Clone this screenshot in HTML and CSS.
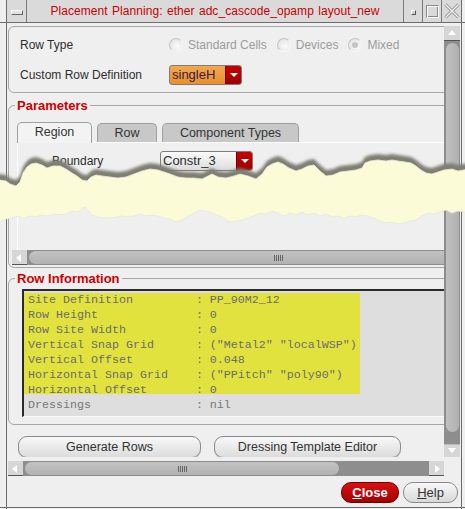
FILE: index.html
```html
<!DOCTYPE html>
<html>
<head>
<meta charset="utf-8">
<title>Placement Planning</title>
<link rel="stylesheet" href="styles.css">
</head>
<body>
<div class="screen">
  <div class="win">
    <div class="titlebar">
      <div class="tb-btn tb-menu"><span class="bar"></span></div>
      <div class="tb-title">Placement Planning: ether adc_cascode_opamp layout_new</div>
      <div class="tb-btn tb-min"><span class="dot"></span></div>
      <div class="tb-btn tb-max"><span class="sq"></span></div>
      <div class="tb-btn tb-close">
        <svg width="16" height="16" viewBox="0 0 16 16"><path d="M1.5 1.5 L14.5 14.5 M14.5 1.5 L1.5 14.5" stroke="#8a8a8a" stroke-width="3" fill="none"/><path d="M1.5 1.5 L14.5 14.5 M14.5 1.5 L1.5 14.5" stroke="#f4f4f4" stroke-width="1.4" fill="none"/></svg>
      </div>
    </div>
    <div class="client">
      <div class="scrollwrap">
        <div class="viewport">
          <div class="content">
            <div class="panel">
              <div class="row">
                <div class="lbl">Row Type</div>
                <div class="radios">
                  <span class="opt"><span class="radio"></span>Standard Cells</span>
                  <span class="opt"><span class="radio"></span>Devices</span>
                  <span class="opt"><span class="radio on"></span>Mixed</span>
                </div>
              </div>
              <div class="row row2">
                <div class="lbl">Custom Row Definition</div>
                <div class="combo orange"><span class="ctext">singleH</span><span class="carrow"></span></div>
              </div>
            </div>

            <fieldset class="group params">
              <legend>Parameters</legend>
              <div class="tabs">
                <div class="tab active t-region">Region</div>
                <div class="tab t-row">Row</div>
                <div class="tab t-comp">Component Types</div>
              </div>
              <div class="tabpanel">
                <div class="prow">
                  <span class="plbl">Boundary</span>
                  <div class="combo white"><span class="ctext">Constr_3</span><span class="carrow"></span></div>
                </div>
              </div>
              <div class="hscroll inner">
                <span class="sbtn left"></span>
                <span class="thumb"><span class="grip"></span></span>
              </div>
            </fieldset>

            <fieldset class="group rowinfo">
              <legend>Row Information</legend>
              <div class="textbox">
                <div class="hl">
<div class="line">Site Definition         : PP_90M2_12</div>
<div class="line">Row Height              : 0</div>
<div class="line">Row Site Width          : 0</div>
<div class="line">Vertical Snap Grid      : ("Metal2" "localWSP")</div>
<div class="line">Vertical Offset         : 0.048</div>
<div class="line">Horizontal Snap Grid    : ("PPitch" "poly90")</div>
<div class="line">Horizontal Offset       : 0</div>
                </div>
                <div class="line plain">Dressings               : nil</div>
              </div>
            </fieldset>

            <div class="actions">
              <button class="btn gen">Generate Rows</button>
              <button class="btn dress">Dressing Template Editor</button>
            </div>
          </div>
        </div>
        <div class="vscroll">
          <span class="vbtn up"></span>
          <span class="vthumb"></span>
          <span class="vtrack"></span>
          <span class="vbtn down"></span>
        </div>
        <div class="hscroll outer">
          <span class="sbtn left"></span>
          <span class="thumb"><span class="grip"></span></span>
          <span class="track"></span>
          <span class="sbtn right"></span>
        </div>
        <div class="corner"></div>
      </div>
      <div class="footer">
        <button class="fbtn close"><u>C</u>lose</button>
        <button class="fbtn help"><u>H</u>elp</button>
      </div>
    </div>
  </div>

  <svg class="tear" width="465" height="509" viewBox="0 0 465 509">
    <defs>
      <filter id="blur" x="-5%" y="-20%" width="110%" height="140%"><feGaussianBlur stdDeviation="1.8"/></filter>
    </defs>
    <path filter="url(#blur)" fill="#7e7e72" d="M-4,174 L0,174 6,175 10,178 16,180 20,176 23,167 27,161 31,158 36,157 42,159 47,162 53,160 60,160 66,163 72,167 77,170 82,174 87,175 91,171 96,169 102,170 110,171 118,172 126,171 134,168 142,165 150,163 158,164 164,166 170,168 178,171 186,172 194,172 202,173 208,170 212,168 218,171 226,172 234,170 240,168 248,170 256,173 262,168 267,161 272,158 278,156 283,158 289,162 296,165 302,163 308,160 314,159 320,165 326,170 333,169 340,166 348,165 356,164 362,162 365,157 370,155 378,154 386,155 392,154 398,155 405,156 411,157 416,160 421,164 426,167 432,168 438,166 444,164 452,163 458,165 469,163 L469,200 L-4,200 Z"/>
    <path fill="#fbfbd8" stroke="#e6e6dc" stroke-width="0.8" d="M-4,180 L0,180 6,181 10,184 16,186 20,182 23,173 27,167 31,164 36,163 42,165 47,168 53,166 60,166 66,169 72,173 77,176 82,180 87,181 91,177 96,175 102,176 110,177 118,178 126,177 134,174 142,171 150,169 158,170 164,172 170,174 178,177 186,178 194,178 202,179 208,176 212,174 218,177 226,178 234,176 240,174 248,176 256,179 262,174 267,167 272,164 278,162 283,164 289,168 296,171 302,169 308,166 314,165 320,171 326,176 333,175 340,172 348,171 356,170 362,168 365,163 370,161 378,160 386,161 392,160 398,161 405,162 411,163 416,166 421,170 426,173 432,174 438,172 444,170 452,169 458,171 469,169 L469,212 465,212 458,211 452,213 446,210 440,212 434,214 428,213 422,216 416,220 410,221 404,223 398,224 392,222 386,223 380,221 374,218 368,216 362,215 356,217 350,216 344,218 338,216 332,217 326,214 320,216 314,213 308,215 302,212 296,215 290,213 284,216 278,213 272,211 266,214 260,213 254,216 248,218 242,220 236,221 230,222 224,218 218,215 212,213 206,211 200,210 194,213 188,216 182,220 176,222 170,219 164,218 158,216 152,215 146,216 140,214 134,216 128,217 122,216 116,217 110,218 104,218 98,217 92,215 88,210 85,207 82,209 78,212 72,211 66,214 60,215 54,214 48,216 42,215 36,217 30,216 24,218 18,216 12,218 6,219 0,222 -4,222 Z"/>
  </svg>
</div>
</body>
</html>
```

FILE: styles.css
```css
* { box-sizing: border-box; }
html, body { margin: 0; padding: 0; }
body {
  width: 465px;
  height: 509px;
  overflow: hidden;
  background: #efefef;
  font-family: "Liberation Sans", Arial, sans-serif;
  font-size: 12px;
  color: #2e2e2e;
}
.screen { position: relative; width: 465px; height: 509px; }
.screen::before {
  content: ""; position: absolute; left: 0; right: 0; top: 22px; height: 1px; background: #6c6c6c;
}
.screen::after {
  content: ""; position: absolute; left: 0; right: 0; top: 507px; height: 1px; background: #6c6c6c;
}

/* window frame */
.win {
  margin-left: 6px;
  width: 456px;
  height: 509px;
  border-left: 1px solid #6c6c6c;
  border-right: 1px solid #6c6c6c;
  display: flex;
  flex-direction: column;
}
.titlebar {
  height: 23px;
  display: flex;
  background: #dadada;
  border-bottom: 1px solid #6c6c6c;
}
.tb-btn { width: 19px; border-right: 1px solid #7a7a7a; display: flex; align-items: center; justify-content: center; }
.tb-menu { width: 20px; }
.tb-menu .bar { width: 12px; height: 5px; background: #e4e4e4; border: 1px solid; border-color: #fafafa #666 #666 #fafafa; margin-top: 2px; }
.tb-title {
  width: 377px;
  border-right: 1px solid #7a7a7a;
  color: #cc0000;
  font-size: 12px;
  letter-spacing: 0.05px;
  word-spacing: 1px;
  text-align: center;
  line-height: 22px;
}
.tb-min .dot { width: 5px; height: 5px; border: 1px solid; border-color: #fafafa #555 #555 #fafafa; background: #d0d0d0; margin-top: 3px; }
.tb-max .sq { width: 13px; height: 13px; border: 1px solid; border-color: #8a8a8a #fafafa #fafafa #8a8a8a; box-shadow: inset 1px 1px 0 #fafafa, inset -1px -1px 0 #8a8a8a; }
.tb-close { border-right: none; }

.client { flex: 1; padding: 3px 0 0 1px; display: flex; flex-direction: column; }
.scrollwrap {
  display: grid;
  grid-template-columns: 436px 16px;
  grid-template-rows: 431px 16px;
  row-gap: 4px;
}
.viewport { overflow: hidden; position: relative; }
.content { width: 452px; }

/* top panel */
.panel {
  height: 67px;
  border: 1px solid #a6a6a6;
  border-radius: 6px;
  padding: 8px 0 0 11px;
}
.row { display: flex; align-items: center; height: 20px; }
.row2 { margin-top: 10px; }
.lbl { width: 149px; }
.radios { display: flex; color: #9c9c9c; }
.opt { display: flex; align-items: center; margin-right: 10px; }
.radio {
  width: 14px; height: 14px; border-radius: 50%;
  background: radial-gradient(circle at 60% 60%, #fbfbfb 0%, #e6e6e6 70%);
  border: 1px solid; border-color: #c4c4c4 #f6f6f6 #f6f6f6 #c4c4c4;
  margin-right: 5px;
  display: flex; align-items: center; justify-content: center;
}
.radio.on::after { content: ""; width: 6px; height: 6px; border-radius: 50%; background: #c4c4c4; }

.combo {
  height: 20px;
  display: flex;
  border: 1px solid #7c7c7c;
  border-radius: 3px;
  overflow: hidden;
}
.combo .ctext { flex: 1; padding-left: 2px; line-height: 18px; font-size: 13px; }
.combo .carrow {
  width: 16px;
  background: linear-gradient(#c80000, #9c0000);
  border-left: 1px solid #700000;
  position: relative;
}
.combo .carrow::after {
  content: ""; position: absolute; left: 4px; top: 7px;
  border-left: 4px solid transparent; border-right: 4px solid transparent; border-top: 4px solid #fff;
}
.combo.orange { width: 73px; background: linear-gradient(#f3a852, #e8902c); }
.combo.orange .ctext { color: #3a1a48; }
.combo.white { width: 93px; background: linear-gradient(#fafafa, #dcdcdc); }

/* groups */
.group {
  margin: 0;
  min-width: 0;
  border: 1px solid #a6a6a6;
  border-radius: 6px;
}
.group legend {
  margin-left: 3px;
  padding: 0 2px;
  color: #cc0000;
  font-weight: bold;
  font-size: 13px;
  line-height: 15px;
}
.params { margin-top: 5px; padding: 0 0 2px 3px; }
.tabs { display: flex; align-items: flex-end; gap: 5px; margin: 8px 0 0 5px; height: 21px; }
.tab {
  height: 19px;
  border: 1px solid #a0a0a0;
  border-bottom: none;
  border-radius: 5px 5px 0 0;
  background: #c8c8c8;
  text-align: center;
  line-height: 19px;
  font-size: 12.5px;
  color: #333;
}
.tab.active { height: 21px; background: #f3f3f3; position: relative; z-index: 1; margin-bottom: -1px; }
.t-region { width: 75px; }
.t-row { width: 60px; }
.t-comp { width: 137px; }
.tabpanel {
  margin-left: 5px;
  height: 108px;
  border-top: 1px solid #fdfdfd;
  border-left: 1px solid #fdfdfd;
  padding: 8px 0 0 34px;
}
.prow { display: flex; align-items: center; height: 20px; }
.plbl { width: 108px; }

.hscroll { display: flex; height: 15px; background: #8e8e8e; }
.sbtn {
  width: 15px; height: 15px; flex: none;
  background: #d6d6d6;
  border-bottom: 1px solid #555;
  position: relative;
}
.sbtn.left::after {
  content: ""; position: absolute; left: 4px; top: 4px;
  border-top: 4px solid transparent; border-bottom: 4px solid transparent; border-right: 5px solid #fff;
}
.sbtn.right::after {
  content: ""; position: absolute; left: 6px; top: 4px;
  border-top: 4px solid transparent; border-bottom: 4px solid transparent; border-left: 5px solid #fff;
}
.thumb {
  height: 15px;
  background: linear-gradient(#c2c2c2, #b2b2b2);
  border: 1px solid #8c8c8c;
  border-radius: 8px 0 0 8px;
  margin-left: 1px;
  position: relative;
}
.grip {
  position: absolute; top: 4px; width: 9px; height: 6px;
  background: repeating-linear-gradient(90deg, #666 0 1px, transparent 1px 2px);
}
.inner { margin-right: -8px; }
.inner .thumb { flex: 1; border-right: none; }
.inner .grip { left: 245px; }
.outer .thumb { width: 316px; border-radius: 8px; }
.outer .grip { left: 153px; }
.outer .track { flex: 1; }

.rowinfo { margin-top: 3px; padding: 0 0 7px 3px; }
.textbox {
  margin: 3px 0 0 10px;
  height: 128px;
  background: #dedede;
  border-top: 2px solid #2a2a2a;
  border-left: 2px solid #2a2a2a;
  border-bottom: 1px solid #fbfbfb;
  padding-top: 2px;
  font-family: "Liberation Mono", "Courier New", monospace;
  font-size: 11.67px;
  color: #6c6c6c;
}
.hl { width: 336px; height: 101px; background: #e2e23e; }
.line { white-space: pre; line-height: 15px; padding-left: 4px; }
.plain { color: #777; margin-top: 4px; }

.actions { display: flex; gap: 13px; margin: 11px 0 0 10px; }
.btn {
  height: 22px;
  border: 1px solid #8a8a8a;
  border-radius: 9px;
  background: linear-gradient(#f8f8f8, #dcdcdc);
  font-family: "Liberation Sans", Arial, sans-serif;
  font-size: 12.5px;
  color: #333;
  padding: 0;
  box-shadow: 0 1px 0 #c0c0c0;
}
.gen { width: 183px; }
.dress { width: 187px; }

.vscroll { display: flex; flex-direction: column; background: #8e8e8e; }
.vbtn { height: 15px; flex: none; background: #d6d6d6; border-bottom: 1px solid #555; position: relative; }
.vbtn.up::after {
  content: ""; position: absolute; left: 4px; top: 4px;
  border-left: 4px solid transparent; border-right: 4px solid transparent; border-bottom: 5px solid #fff;
}
.vbtn.down { height: 13px; border-bottom: none; border-top: 1px solid #bbb; }
.vbtn.down::after {
  content: ""; position: absolute; left: 4px; top: 3px;
  border-left: 4px solid transparent; border-right: 4px solid transparent; border-top: 5px solid #fff;
}
.vthumb {
  height: 391px; margin: 1px 0 0 1px;
  background: linear-gradient(90deg, #c0c0c0, #b0b0b0);
  border: 1px solid #8c8c8c;
  border-radius: 8px;
}
.vtrack { flex: 1; }

.footer { display: flex; justify-content: flex-end; gap: 4px; padding: 5px 3px 0 0; }
.fbtn {
  height: 21px;
  border-radius: 10px;
  font-family: "Liberation Sans", Arial, sans-serif;
  font-size: 13px;
  padding: 0;
}
.close {
  width: 58px;
  background: linear-gradient(#dc1010, #a20000);
  border: 1px solid #6a0000;
  color: #fff;
  font-weight: bold;
}
.help {
  width: 55px;
  background: linear-gradient(#f8f8f8, #d8d8d8);
  border: 1px solid #8a8a8a;
  color: #333;
}

.tear { position: absolute; left: 0; top: 0; pointer-events: none; }
```
